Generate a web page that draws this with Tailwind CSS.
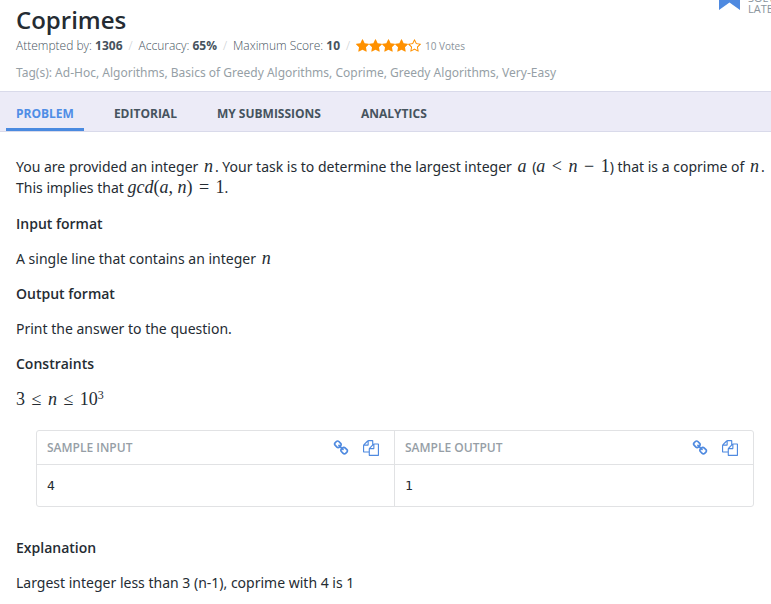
<!DOCTYPE html>
<html lang="en">
<head>
<meta charset="utf-8">
<title>Coprimes</title>
<script src="https://cdn.jsdelivr.net/npm/@tailwindcss/browser@4"></script>
</head>
<body class="bg-white overflow-x-hidden font-['Open_Sans',sans-serif] text-sm text-[#252c33]">
<svg class="hidden" aria-hidden="true">
  <symbol id="star" viewBox="0 0 1792 1792"><path d="M1728 647q0 22-26 48l-363 354 86 500q1 7 1 20 0 21-10.500 35.500t-30.500 14.500q-19 0-40-12l-449-236-449 236q-22 12-40 12-21 0-31.500-14.500t-10.500-35.500q0-6 2-20l86-500-364-354q-25-27-25-48 0-37 56-46l502-73 225-455q19-41 49-41t49 41l225 455 502 73q56 9 56 46z"/></symbol>
  <symbol id="star-o" viewBox="0 0 1792 1792"><path d="M1201 1004l306-297-422-62-189-382-189 382-422 62 306 297-73 421 378-199 377 199zm527-357q0 22-26 48l-363 354 86 500q1 7 1 20 0 50-41 50-19 0-40-12l-449-236-449 236q-22 12-40 12-21 0-31.5-14.5t-10.5-35.5q0-6 2-20l86-500-364-354q-25-27-25-48 0-37 56-46l502-73 225-455q19-41 49-41t49 41l225 455 502 73q56 9 56 46z"/></symbol>
  <symbol id="link" viewBox="0 0 1792 1792"><path d="M1520 1216q0-40-28-68l-208-208q-28-28-68-28-42 0-72 32 3 3 19 18.5t21.5 21.5 15 19 13 25.5 3.5 27.5q0 40-28 68t-68 28q-15 0-27.5-3.5t-25.5-13-19-15-21.5-21.5-18.5-19q-33 31-33 73 0 40 28 68l206 207q27 27 68 27 40 0 68-26l147-146q28-28 28-67zm-703-705q0-40-28-68l-206-207q-28-28-68-28-39 0-68 27l-147 146q-28 28-28 67 0 40 28 68l208 208q27 27 68 27 42 0 72-31-3-3-19-18.5t-21.5-21.5-15-19-13-25.5-3.5-27.5q0-40 28-68t68-28q15 0 27.5 3.5t25.5 13 19 15 21.5 21.5 18.5 19q33-31 33-73zm895 705q0 120-85 203l-147 146q-83 83-203 83-121 0-204-85l-206-207q-83-83-83-203 0-123 88-209l-88-88q-86 88-208 88-120 0-204-84l-208-208q-84-84-84-204t85-203l147-146q83-83 203-83 121 0 204 85l206 207q83 83 83 203 0 123-88 209l88 88q86-88 208-88 120 0 204 84l208 208q84 84 84 204z"/></symbol>
  <symbol id="copy" viewBox="0 0 1792 1792"><path d="M1696 384q40 0 68 28t28 68v1216q0 40-28 68t-68 28h-960q-40 0-68-28t-28-68v-288h-544q-40 0-68-28t-28-68v-672q0-40 20-88t48-76l408-408q28-28 76-48t88-20h416q40 0 68 28t28 68v328q68-40 128-40h416zm-544 213l-299 299h299v-299zm-640-384l-299 299h299v-299zm196 647l316-316v-416h-384v416q0 40-28 68t-68 28h-416v640h512v-256q0-40 20-88t48-76zm956 804v-1152h-384v416q0 40-28 68t-68 28h-416v640h896z"/></symbol>
</svg>

<header class="relative px-4 pt-1">
  <h1 class="text-2xl leading-8 font-semibold">Coprimes</h1>
  <div class="flex items-center text-xs leading-5 font-light text-[#46535e]">
    <span>Attempted by: <b class="font-bold">1306</b></span>
    <span class="w-4 text-center text-[#c8ccd0]">/</span>
    <span>Accuracy: <b class="font-bold">65%</b></span>
    <span class="w-4 text-center text-[#c8ccd0]">/</span>
    <span>Maximum Score: <b class="font-bold">10</b></span>
    <span class="w-4 text-center text-[#c8ccd0]">/</span>
    <span class="flex text-[#ff9100]" role="img" aria-label="4 out of 5 stars">
      <svg class="h-[14px] w-[13px] fill-current" viewBox="64 64 1664 1664"><use href="#star" width="1792" height="1792"/></svg>
      <svg class="h-[14px] w-[13px] fill-current" viewBox="64 64 1664 1664"><use href="#star" width="1792" height="1792"/></svg>
      <svg class="h-[14px] w-[13px] fill-current" viewBox="64 64 1664 1664"><use href="#star" width="1792" height="1792"/></svg>
      <svg class="h-[14px] w-[13px] fill-current" viewBox="64 64 1664 1664"><use href="#star" width="1792" height="1792"/></svg>
      <svg class="h-[14px] w-[13px] fill-current" viewBox="64 64 1664 1664"><use href="#star-o" width="1792" height="1792"/></svg>
    </span>
    <span class="ml-1 text-[10px] font-normal text-[#8b949c]">10 Votes</span>
  </div>
  <p class="mt-2 pb-[9px] font-['Noto_Sans',sans-serif] text-xs leading-[18px] text-[#969fa6]">Tag(s): Ad-Hoc, Algorithms, Basics of Greedy Algorithms, Coprime, Greedy Algorithms, Very-Easy</p>
  <button type="button" class="absolute -top-[11px] left-[719px] flex items-start gap-2 text-left">
    <svg class="h-[21px] w-[21px] fill-[#4f8ae0]" viewBox="0 0 21 21"><path d="M0 0h21v21L10.500 13.500 0 21z"/></svg>
    <span class="mt-[3px] text-[11px] leading-[11px] text-[#8b949c]">SOLVE<br>LATER</span>
  </button>
</header>

<nav class="flex gap-5 border-y border-[#d9daea] bg-[#ecebf7] px-1.5 text-xs font-bold text-[#46535e]">
  <a href="#" class="flex h-[39px] items-center border-b-3 border-[#4a8ae0] px-2.5 pt-2 text-[#4f8de6]">PROBLEM</a>
  <a href="#" class="flex h-[39px] items-center border-b-3 border-transparent px-2.5 pt-2">EDITORIAL</a>
  <a href="#" class="flex h-[39px] items-center border-b-3 border-transparent px-2.5 pt-2">MY SUBMISSIONS</a>
  <a href="#" class="flex h-[39px] items-center border-b-3 border-transparent px-2.5 pt-2">ANALYTICS</a>
</nav>

<main class="flex flex-col gap-3.5 pt-6 pl-4 font-['Noto_Sans',sans-serif] leading-[21px]">
  <p class="mb-px whitespace-nowrap">You are provided an integer <i class="px-0.5 font-['Liberation_Serif',serif] text-lg leading-[21px]">n</i>. Your task is to determine the largest integer <i class="px-0.5 font-['Liberation_Serif',serif] text-lg leading-[21px]">a</i> (<span class="font-['Liberation_Serif',serif] text-lg leading-[21px]"><i>a</i> <span class="mx-0.5">&lt;</span> <i>n</i> <span class="mx-0.5">−</span> 1</span>) that is a coprime of <i class="px-0.5 font-['Liberation_Serif',serif] text-lg leading-[21px]">n</i>.<br>This implies that <span class="font-['Liberation_Serif',serif] text-lg leading-[21px]"><i>gcd</i>(<i>a</i>, <i>n</i>) <span class="mx-0.5">=</span> 1</span>.</p>
  <h2 class="font-['Open_Sans',sans-serif] font-semibold">Input format</h2>
  <p>A single line that contains an integer <i class="px-0.5 font-['Liberation_Serif',serif] text-lg leading-[21px]">n</i></p>
  <h2 class="font-['Open_Sans',sans-serif] font-semibold">Output format</h2>
  <p>Print the answer to the question.</p>
  <h2 class="font-['Open_Sans',sans-serif] font-semibold">Constraints</h2>
  <p class="mt-px font-['Liberation_Serif',serif] text-lg leading-[21px]">3 <span class="mx-0.5">≤</span> <i>n</i> <span class="mx-0.5">≤</span> 10<sup class="text-xs leading-none">3</sup></p>

  <div class="mt-1.5 mr-[17px] ml-5 grid grid-cols-2 rounded-[3px] border border-[#e1e2e4] font-['Open_Sans',sans-serif]">
    <section class="border-r border-[#e1e2e4]">
      <div class="flex h-[34px] items-center border-b border-[#e1e2e4] pr-[15px] pl-2.5">
        <h3 class="flex-1 text-xs font-semibold text-[#969ea6]">SAMPLE INPUT</h3>
        <button type="button" aria-label="Link to sample input" class="mr-3.5"><svg class="size-4 fill-[#4f8ae0]"><use href="#link"/></svg></button>
        <button type="button" aria-label="Copy sample input"><svg class="size-4 fill-[#4f8ae0]"><use href="#copy"/></svg></button>
      </div>
      <pre class="px-2.5 py-2.5 font-['DejaVu_Sans_Mono',monospace] text-[13px] leading-[21px]">4</pre>
    </section>
    <section>
      <div class="flex h-[34px] items-center border-b border-[#e1e2e4] pr-[15px] pl-2.5">
        <h3 class="flex-1 text-xs font-semibold text-[#969ea6]">SAMPLE OUTPUT</h3>
        <button type="button" aria-label="Link to sample output" class="mr-3.5"><svg class="size-4 fill-[#4f8ae0]"><use href="#link"/></svg></button>
        <button type="button" aria-label="Copy sample output"><svg class="size-4 fill-[#4f8ae0]"><use href="#copy"/></svg></button>
      </div>
      <pre class="px-2.5 py-2.5 font-['DejaVu_Sans_Mono',monospace] text-[13px] leading-[21px]">1</pre>
    </section>
  </div>

  <h2 class="mt-4 font-['Open_Sans',sans-serif] font-semibold">Explanation</h2>
  <p>Largest integer less than 3 (n-1), coprime with 4 is 1</p>
</main>
</body>
</html>
